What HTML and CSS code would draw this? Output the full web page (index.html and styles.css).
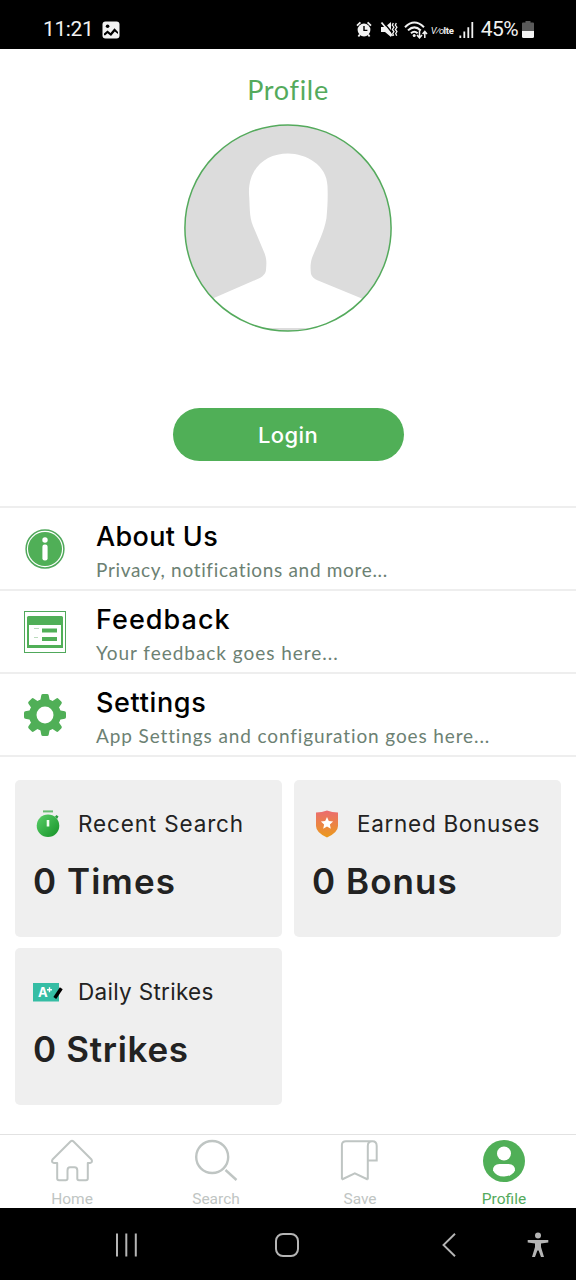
FILE: index.html
```html
<!DOCTYPE html>
<html lang="en">
<head>
<meta charset="utf-8">
<title>Profile</title>
<link rel="stylesheet" href="styles.css">
</head>
<body>
<div class="screen">
  <header class="status">
    <div class="status-left">
      <span class="clock">11:21</span>
      <svg width="18" height="18" viewBox="0 0 18 18"><rect x=".5" y=".5" width="17" height="17" rx="3" fill="#f2f2f2"/><circle cx="5.600" cy="5.300" r="1.800" fill="#000"/><path d="M2 14V12.500L5.500 9.500 8.500 12 12.500 7.300 16 11V13L12.800 10.500 9 15 5.500 12.300 3 14.500z" fill="#000"/></svg>
    </div>
    <div class="status-right">
      <svg class="alarm" width="16" height="17" viewBox="0 0 16 17"><circle cx="8" cy="9" r="6.400" fill="#f2f2f2"/><path d="M1 4.600 4.400 1.400M15 4.600 11.600 1.400M3.800 13.600 2.400 15.600M12.200 13.600l1.400 2" stroke="#f2f2f2" stroke-width="1.800" fill="none"/><path d="M8 5v4.400h3.400" stroke="#000" stroke-width="1.400" fill="none"/></svg>
      <svg class="mute" width="18" height="17" viewBox="0 0 18 17"><path d="M1 6h4l6-5v15l-6-5H1z" fill="#f2f2f2"/><path d="M3 .5l11 13.500" stroke="#000" stroke-width="1.500"/><path d="M1.500 1.500l11 13.500" stroke="#f2f2f2" stroke-width="1.700"/><path d="M13.300 2l-1 2.200 1.600 2-1.500 2.200 1.500 2.200-1.200 2 1 2.200M16.300 2l-1 2.200 1.600 2-1.500 2.200 1.500 2.200-1.200 2 1 2.200" stroke="#f2f2f2" stroke-width="1.300" fill="none"/></svg>
      <svg class="wifi" width="24" height="18" viewBox="0 0 24 18"><path d="M1 6.200Q10.300 -3.200 20 6.200M4 9.400q6.300-6 12.800 0M7 12.200q3.300-3 6.600 0" stroke="#f2f2f2" stroke-width="2" fill="none"/><circle cx="10.200" cy="14.500" r="1.500" fill="#f2f2f2"/><path d="M15.500 9.500v7M13 14l2.500 2.800L18 14M20.800 17v-6M18.600 13l2.200-2.600L23 13" stroke="#f2f2f2" stroke-width="1.500" fill="none"/></svg>
      <span class="volte"><i>V⁄o</i><b>lte</b></span>
      <svg class="signal" width="15" height="16" viewBox="0 0 15 16"><path d="M1.300 13.500V16M5.300 9.500V16M9.300 5.200V16M13.300 0V16" stroke="#f2f2f2" stroke-width="1.800"/></svg>
      <span class="percent">45%</span>
      <svg class="battery" width="12" height="17" viewBox="0 0 12 17"><path d="M3.500 0h5v1.500H11q1 0 1 1V10H0V2.500q0-1 1-1h2.500z" fill="#5a5a5a"/><path d="M0 10h12v5.500q0 1.500-1.500 1.500h-9Q0 17 0 15.500z" fill="#f5f5f5"/></svg>
    </div>
  </header>

  <main class="content">
    <h1 class="title">Profile</h1>
    <svg class="avatar" width="208" height="208" viewBox="0 0 208 208">
      <defs><clipPath id="disc"><circle cx="104" cy="104" r="103"/></clipPath></defs>
      <g clip-path="url(#disc)">
        <rect width="208" height="208" fill="#dcdcdc"/>
        <path d="M104 29.500C122 29.500 143 41 143.500 62C144 73 143.500 84 142.500 94C140 109 133 121 128 134C126 140 126.500 146 127 150C128 153 130 155 134 156.500L208 187V204H0V187L70 156.500C77 154 81.500 151 82 146C82.500 139 83 135 80 128L69 102C65 92 66 82 65 70C64 44 82 29.500 104 29.500Z" fill="#fff"/>
      </g>
      <circle cx="104" cy="104" r="103.100" fill="none" stroke="#54aa5c" stroke-width="1.500"/>
    </svg>
    <button class="login">Login</button>

    <nav class="menu">
      <a class="row">
        <svg width="42" height="42" viewBox="0 0 42 42"><circle cx="21" cy="21" r="18.900" fill="#fff" stroke="#50a85b" stroke-width="1.500"/><circle cx="21" cy="21" r="17" fill="#50af57"/><circle cx="21" cy="12" r="2.700" fill="#fff"/><rect x="18.400" y="16.500" width="5.200" height="16" rx="2.200" fill="#fff"/></svg>
        <span class="row-text"><span class="row-title about">About Us</span><span class="row-sub about">Privacy, notifications and more...</span></span>
      </a>
      <a class="row">
        <svg width="42" height="42" viewBox="0 0 42 42"><rect x=".5" y=".5" width="41" height="41" fill="#fff" stroke="#50a85b"/><path d="M4.500 5H37.500Q39 5 39 6.500V37H3V6.500Q3 5 4.500 5z" fill="#50af57"/><path d="M5 14h32v20H5z" fill="#fff"/><path d="M18 17.500h15v4H18zM18 26h15v4H18z" fill="#50af57"/><path d="M10 17.500h5M10 26.500h4" stroke="#9ccc9f" stroke-width=".7"/></svg>
        <span class="row-text"><span class="row-title feedback">Feedback</span><span class="row-sub feedback">Your feedback goes here...</span></span>
      </a>
      <a class="row">
        <svg width="42" height="42" viewBox="0 0 42 42"><g fill="#50af57"><circle cx="21" cy="21" r="16"/><path id="tooth" d="M16 8 17.300 1.300Q17.500 0 19 0h4q1.500 0 1.700 1.300L26 8V34l-1.300 6.700Q24.500 42 23 42h-4q-1.500 0-1.700-1.300L16 34z"/><use href="#tooth" transform="rotate(45 21 21)"/><use href="#tooth" transform="rotate(90 21 21)"/><use href="#tooth" transform="rotate(135 21 21)"/></g><circle cx="21" cy="21" r="8.500" fill="#fff"/></svg>
        <span class="row-text"><span class="row-title settings">Settings</span><span class="row-sub settings">App Settings and configuration goes here...</span></span>
      </a>
    </nav>

    <section class="cards">
      <article class="card">
        <div class="card-head">
          <svg width="30" height="30" viewBox="0 0 30 30"><defs><linearGradient id="g" x1="0" y1="0" x2="1" y2="1"><stop offset="0" stop-color="#5bd06a"/><stop offset="1" stop-color="#149126"/></linearGradient></defs><path d="M10 2.400h10" stroke="#68bb72" stroke-width="2"/><path d="M22 7.500l1.500-1.500 2 1.600-1.500 2.300z" fill="#2d9c43"/><circle cx="15" cy="16.800" r="11.300" fill="url(#g)"/><path d="M15 11v6.500" stroke="#f2fff2" stroke-width="2.600"/></svg>
          <span class="label recent">Recent Search</span>
        </div>
        <strong class="value times">0 Times</strong>
      </article>
      <article class="card">
        <div class="card-head">
          <svg width="30" height="30" viewBox="0 0 30 30"><defs><linearGradient id="o" x1="0" y1="0" x2="0" y2="1"><stop offset="0" stop-color="#eb6c71"/><stop offset="1" stop-color="#eb9a1b"/></linearGradient></defs><path d="M15 1.500Q20 3.500 26 3.500V17Q26 23.500 15 28.500Q4 23.500 4 17V3.500Q10 3.500 15 1.500Z" fill="url(#o)"/><path d="M15 8l1.800 4 4.300.5-3.200 2.900.9 4.300-3.800-2.200-3.800 2.200.9-4.300-3.200-2.900 4.300-.5z" fill="#fff"/></svg>
          <span class="label earned">Earned Bonuses</span>
        </div>
        <strong class="value bonus">0 Bonus</strong>
      </article>
      <article class="card">
        <div class="card-head">
          <svg width="30" height="30" viewBox="0 0 30 30"><path d="M0 6h26v18.500H0z" fill="#35bda4"/><text class="grade" x="5" y="20">A</text><path d="M16.500 10.300v5M14 12.800h5" stroke="#fff" stroke-width="1.400"/><path d="M21.800 21 28.300 11.200" stroke="#000" stroke-width="3.400"/></svg>
          <span class="label daily">Daily Strikes</span>
        </div>
        <strong class="value strikes">0 Strikes</strong>
      </article>
    </section>
  </main>

  <nav class="tabs">
    <a class="tab">
      <svg width="44" height="44" viewBox="0 0 44 44"><path d="M20.500 2.500Q22 1 23.500 2.500L41.500 20.500Q43 23.500 40 24H37.800V39.500Q37.800 41.200 36 41.200H29Q27.300 41.200 27.300 39.500V31.500Q27.300 28.300 24.500 28.300H20Q17.500 28.300 17.500 31.500V39.500Q17.500 41.200 15.800 41.200H9Q7.200 41.200 7.200 39.500V24H4Q1 23.500 2.500 20.500Z" fill="none" stroke="#bfc5c3" stroke-width="2" stroke-linejoin="round"/></svg>
      <span>Home</span>
    </a>
    <a class="tab">
      <svg width="44" height="44" viewBox="0 0 44 44"><circle cx="18.200" cy="18" r="16" fill="none" stroke="#bfc5c3" stroke-width="2.400"/><path d="M31.500 31 42.500 41" stroke="#bfc5c3" stroke-width="2.400"/></svg>
      <span>Search</span>
    </a>
    <a class="tab">
      <svg width="44" height="44" viewBox="0 0 44 44"><path d="M3.900 40.500V6Q3.900 2.300 8 2.300H34.500Q38.700 2.300 38.700 7V21.500H30.500M29.800 40.500V7Q29.800 2.300 34.200 2.300M3.900 40.500 16.800 34.300 29.800 40.500" fill="none" stroke="#bfc5c3" stroke-width="2" stroke-linejoin="miter"/></svg>
      <span>Save</span>
    </a>
    <a class="tab active">
      <svg width="44" height="44" viewBox="0 0 44 44"><circle cx="22" cy="22" r="21" fill="#50af57"/><circle cx="22" cy="14.500" r="7" fill="#fff"/><path d="M11 31.500Q11 25 17.500 25H26.500Q33 25 33 31.500Q30 37.500 22 37.500Q14 37.500 11 31.500Z" fill="#fff"/></svg>
      <span>Profile</span>
    </a>
  </nav>

  <footer class="system">
    <svg class="recents" width="22" height="24" viewBox="0 0 22 24"><path d="M2 .5v23M11.300 .5v23M20.800 .5v23" stroke="#b5b5b5" stroke-width="2"/></svg>
    <svg class="home" width="24" height="24" viewBox="0 0 24 24"><rect x="1" y="1" width="22" height="22" rx="7" fill="none" stroke="#b5b5b5" stroke-width="2"/></svg>
    <svg class="back" width="14" height="24" viewBox="0 0 14 24"><path d="M13 .7 1.500 12 13 23.300" fill="none" stroke="#b5b5b5" stroke-width="1.900"/></svg>
    <svg class="access" width="22" height="26" viewBox="0 0 22 26"><circle cx="11" cy="3.500" r="3" fill="#b5b5b5"/><path d="M.7 8H21.300V10.500L14 11.500V15L17 25H14L11.600 18.500H10.400L8 25H5L8 15V11.500L.7 10.500Z" fill="#b5b5b5"/></svg>
  </footer>
</div>
</body>
</html>
```
FILE: styles.css
```css
* { box-sizing: border-box; }
body { margin: 0; background: #fff; font-family: Inter, "Open Sans", sans-serif; }
svg { display: block; flex: none; }
.screen { width: 576px; height: 1280px; display: flex; flex-direction: column; overflow: hidden; }

.status { height: 49px; flex: none; background: #000; color: #f2f2f2; font-family: Roboto, sans-serif; display: flex; justify-content: space-between; padding: 10px 42px 0 43px; }
.status-left, .status-right { display: flex; align-items: center; height: 39px; }
.status-left { gap: 9px; }
.clock { font-size: 21px; line-height: 24px; padding-bottom: 2px; letter-spacing: -0.4px; }
.mute { margin-left: 8px; }
.wifi { margin-left: 6px; }
.volte { margin-left: 3px; width: 24px; font-size: 9.5px; display: flex; white-space: nowrap; letter-spacing: -0.9px; padding-top: 2px; }
.volte b { font-size: 9.5px; letter-spacing: -0.2px; }
.signal { margin-left: 4px; }
.percent { margin-left: 7px; font-size: 21px; line-height: 24px; padding-bottom: 2px; letter-spacing: -0.6px; }
.battery { margin-left: 4px; }

.content { flex: 1; display: flex; flex-direction: column; align-items: center; }
.title { margin: 24px 0 0; height: 34px; font: 400 27px/34px Lato, sans-serif; letter-spacing: 0.7px; color: #54aa5c; }
.avatar { margin-top: 16.5px; }
.login { margin-top: 76.5px; width: 231px; height: 53px; border: 0; border-radius: 27px; background: #50af57; color: #fff; font: 500 22px/53px Inter, sans-serif; padding: 1px 0 0; letter-spacing: 0.4px; }

.menu { width: 100%; margin-top: 45px; border-top: 2px solid #eee; }
.row { height: 83px; border-bottom: 2px solid #eee; display: flex; align-items: center; padding-left: 24px; gap: 30px; }
.row-text { display: flex; flex-direction: column; white-space: nowrap; padding-top: 3px; }
.row-title { font-size: 27px; font-weight: 500; line-height: 38px; color: #000; }
.row-title.about { letter-spacing: 0.35px; }
.row-title.feedback { letter-spacing: 1.05px; }
.row-title.settings { letter-spacing: 0.65px; }
.row-sub { font: 400 19px/27px Lato, sans-serif; color: #6c8173; }
.row-sub.about { letter-spacing: 0.67px; }
.row-sub.feedback { letter-spacing: 0.97px; }
.row-sub.settings { letter-spacing: 0.88px; }

.cards { width: 100%; padding: 23px 15px 0; display: grid; grid-template-columns: 267px 267px; gap: 11px 12px; }
.card { height: 157px; border-radius: 5px; background: #efefef; padding: 28px 18px 0; color: #222; white-space: nowrap; }
.card-head { display: flex; align-items: center; gap: 15px; height: 32px; }
.label { font-size: 22.5px; line-height: 32px; }
.label.recent { letter-spacing: 0.85px; }
.label.earned { letter-spacing: 0.7px; }
.label.daily { letter-spacing: 0.3px; }
.value { display: block; margin-top: 18.5px; font-size: 35px; line-height: 44px; font-weight: 600; }
.value.times, .value.bonus { letter-spacing: 1.05px; }
.value.strikes { letter-spacing: 0.7px; }
.grade { font: 700 13px Inter, sans-serif; fill: #fff; }

.tabs { height: 74px; flex: none; border-top: 1px solid #e2e2e2; display: grid; grid-template-columns: repeat(4, 1fr); }
.tab { display: flex; flex-direction: column; align-items: center; padding-top: 4px; font: 400 15.5px/20px Roboto, sans-serif; color: #bfc5c3; }
.tab span { margin-top: 6px; }
.tab.active { color: #54aa5c; }

.system { height: 72px; flex: none; background: #000; display: flex; align-items: center; padding: 2px 0 0 115px; }
.home { margin-left: 138px; }
.back { margin-left: 143px; }
.access { margin-left: 71px; }
```
